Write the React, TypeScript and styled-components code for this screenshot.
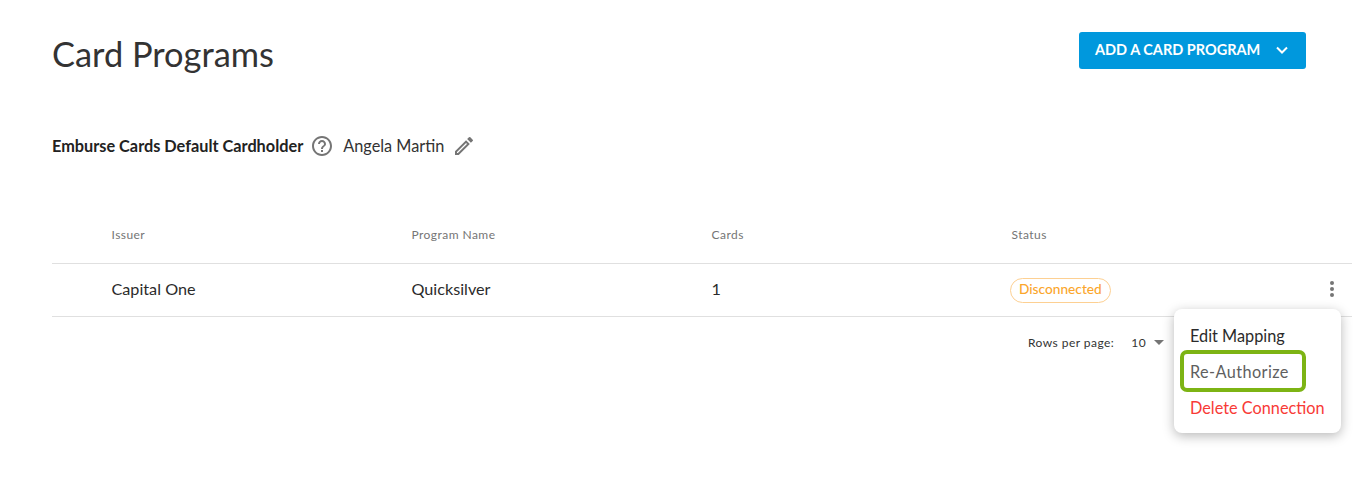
import React from "react";
import styled, { createGlobalStyle } from "styled-components";

const GlobalStyle = createGlobalStyle`
  html, body {
    margin: 0;
    padding: 0;
    background: #fff;
    font-family: Lato, "Open Sans", sans-serif;
    color: #2b2b2b;
  }
`;

const Page = styled.div`
  position: relative;
  width: 1356px;
  height: 491px;
  overflow: hidden;
  padding: 32px 4px 0 52px;
  box-sizing: border-box;
`;

const Header = styled.header`
  display: flex;
  justify-content: space-between;
  align-items: flex-start;
  padding-right: 46px;
`;

const Title = styled.h1`
  margin: 0;
  height: 45px;
  font-size: 34.4px;
  line-height: 43px;
  font-weight: 400;
  color: #333;
`;

const AddButton = styled.button`
  display: flex;
  align-items: center;
  gap: 15px;
  width: 227px;
  height: 37px;
  padding: 0 0 3px 16px;
  border: 0;
  border-radius: 3px;
  background: #0098dd;
  color: #fff;
  font: 700 14.5px Lato, sans-serif;
`;

const ButtonChevron = styled.svg`
  margin-top: 3px;
`;

const DefaultRow = styled.div`
  display: flex;
  align-items: center;
  margin-top: 53px;
  height: 30px;
`;

const DefaultLabel = styled.span`
  font-size: 16.3px;
  font-weight: 700;
  color: #222;
`;

const HelpIcon = styled.svg`
  margin: 1px 0 0 7px;
  color: #757575;
`;

const PersonName = styled.span`
  margin-left: 9px;
  font-size: 16.3px;
  color: #333;
`;

const EditIcon = styled.svg`
  margin: 1px 0 0 8px;
  color: #757575;
`;

const Table = styled.div`
  margin-top: 46px;
`;

const Row = styled.div<{ $height: number }>`
  display: grid;
  grid-template-columns: repeat(4, 300px) 1fr;
  align-items: center;
  height: ${(p) => p.$height}px;
  border-bottom: 1px solid #e0e0e0;
`;

const HeadCell = styled.div`
  padding: 0 0 1px 60px;
  font-size: 12px;
  letter-spacing: 0.45px;
  color: #757575;
  margin-left: -0.5px;
`;

const Cell = styled.div`
  padding: 0 0 3px 60px;
  font-size: 16.2px;
  color: #2b2b2b;
  margin-left: -0.5px;
`;

const StatusCell = styled.div`
  padding: 0 0 0 58px;
`;

const StatusPill = styled.span`
  display: inline-block;
  padding: 0 8px;
  height: 25px;
  line-height: 20px;
  box-sizing: border-box;
  border: 1px solid #fdd092;
  border-radius: 13px;
  font-size: 13.7px;
  font-weight: 500;
  color: #fba62c;
`;

const MoreCell = styled.div`
  display: flex;
  justify-content: flex-end;
  padding: 0 14px 3px 0;
  color: #757575;
`;

const Pagination = styled.div`
  display: flex;
  align-items: center;
  margin: 18px 0 0 976px;
  font-size: 12px;
  letter-spacing: 0.45px;
  color: #333;
`;

const PageSize = styled.span`
  margin-left: 17px;
`;

const Caret = styled.span`
  margin-left: 8px;
  width: 0;
  height: 0;
  border-left: 5px solid transparent;
  border-right: 5px solid transparent;
  border-top: 5px solid #757575;
`;

const Menu = styled.div`
  position: absolute;
  left: 1174px;
  top: 309px;
  width: 167px;
  height: 124px;
  box-sizing: border-box;
  padding: 16px 0 0 16px;
  display: flex;
  flex-direction: column;
  gap: 15px;
  background: #fff;
  border-radius: 8px;
  box-shadow: 0 3px 12px rgba(0, 0, 0, 0.28);
`;

const MenuItem = styled.div<{ $color: string; $spacing?: number }>`
  font-size: 16.3px;
  line-height: 21px;
  white-space: nowrap;
  letter-spacing: ${(p) => p.$spacing ?? 0}px;
  color: ${(p) => p.$color};
`;

const Highlight = styled.div`
  position: absolute;
  left: 1180px;
  top: 350px;
  width: 126px;
  height: 42px;
  box-sizing: border-box;
  border: 4px solid #7db414;
  border-radius: 7px;
`;

export default function App() {
  return (
    <Page>
      <GlobalStyle />
      <Header>
        <Title>Card Programs</Title>
        <AddButton>
          ADD A CARD PROGRAM
          <ButtonChevron width="14" height="9" viewBox="0 0 14 9" fill="none" stroke="currentColor" strokeWidth="2">
            <path d="M2 1.5l5 5 5-5" />
          </ButtonChevron>
        </AddButton>
      </Header>
      <DefaultRow>
        <DefaultLabel>Emburse Cards Default Cardholder</DefaultLabel>
        <HelpIcon width="24" height="24" viewBox="0 0 24 24" fill="currentColor">
          <path d="M11 18h2v-2h-2v2zm1-16C6.48 2 2 6.48 2 12s4.48 10 10 10 10-4.48 10-10S17.52 2 12 2zm0 18c-4.41 0-8-3.59-8-8s3.59-8 8-8 8 3.59 8 8-3.59 8-8 8zm0-14c-2.21 0-4 1.79-4 4h2c0-1.1.9-2 2-2s2 .9 2 2c0 2-3 1.75-3 5h2c0-2.25 3-2.5 3-5 0-2.21-1.79-4-4-4z" />
        </HelpIcon>
        <PersonName>Angela Martin</PersonName>
        <EditIcon width="24" height="24" viewBox="0 0 24 24" fill="currentColor">
          <path d="M3 17.25V21h3.75L17.81 9.94l-3.75-3.75L3 17.25zM5.92 19H5v-.92l9.06-9.06.92.92L5.92 19zM20.71 7.04a1 1 0 0 0 0-1.41l-2.34-2.34a1 1 0 0 0-1.41 0l-1.83 1.83 3.75 3.75 1.83-1.83z" />
        </EditIcon>
      </DefaultRow>
      <Table>
        <Row $height={57}>
          <HeadCell>Issuer</HeadCell>
          <HeadCell>Program Name</HeadCell>
          <HeadCell>Cards</HeadCell>
          <HeadCell>Status</HeadCell>
        </Row>
        <Row $height={52}>
          <Cell>Capital One</Cell>
          <Cell>Quicksilver</Cell>
          <Cell>1</Cell>
          <StatusCell>
            <StatusPill>Disconnected</StatusPill>
          </StatusCell>
          <MoreCell>
            <svg width="12" height="18" viewBox="0 0 12 18" fill="currentColor">
              <circle cx="6" cy="3" r="2" />
              <circle cx="6" cy="9" r="2" />
              <circle cx="6" cy="15" r="2" />
            </svg>
          </MoreCell>
        </Row>
      </Table>
      <Pagination>
        Rows per page:
        <PageSize>10</PageSize>
        <Caret />
      </Pagination>
      <Menu>
        <MenuItem $color="#2b2b2b">Edit Mapping</MenuItem>
        <MenuItem $color="#5f5f5f" $spacing={0.4}>Re-Authorize</MenuItem>
        <MenuItem $color="#f83a36">Delete Connection</MenuItem>
      </Menu>
      <Highlight />
    </Page>
  );
}
